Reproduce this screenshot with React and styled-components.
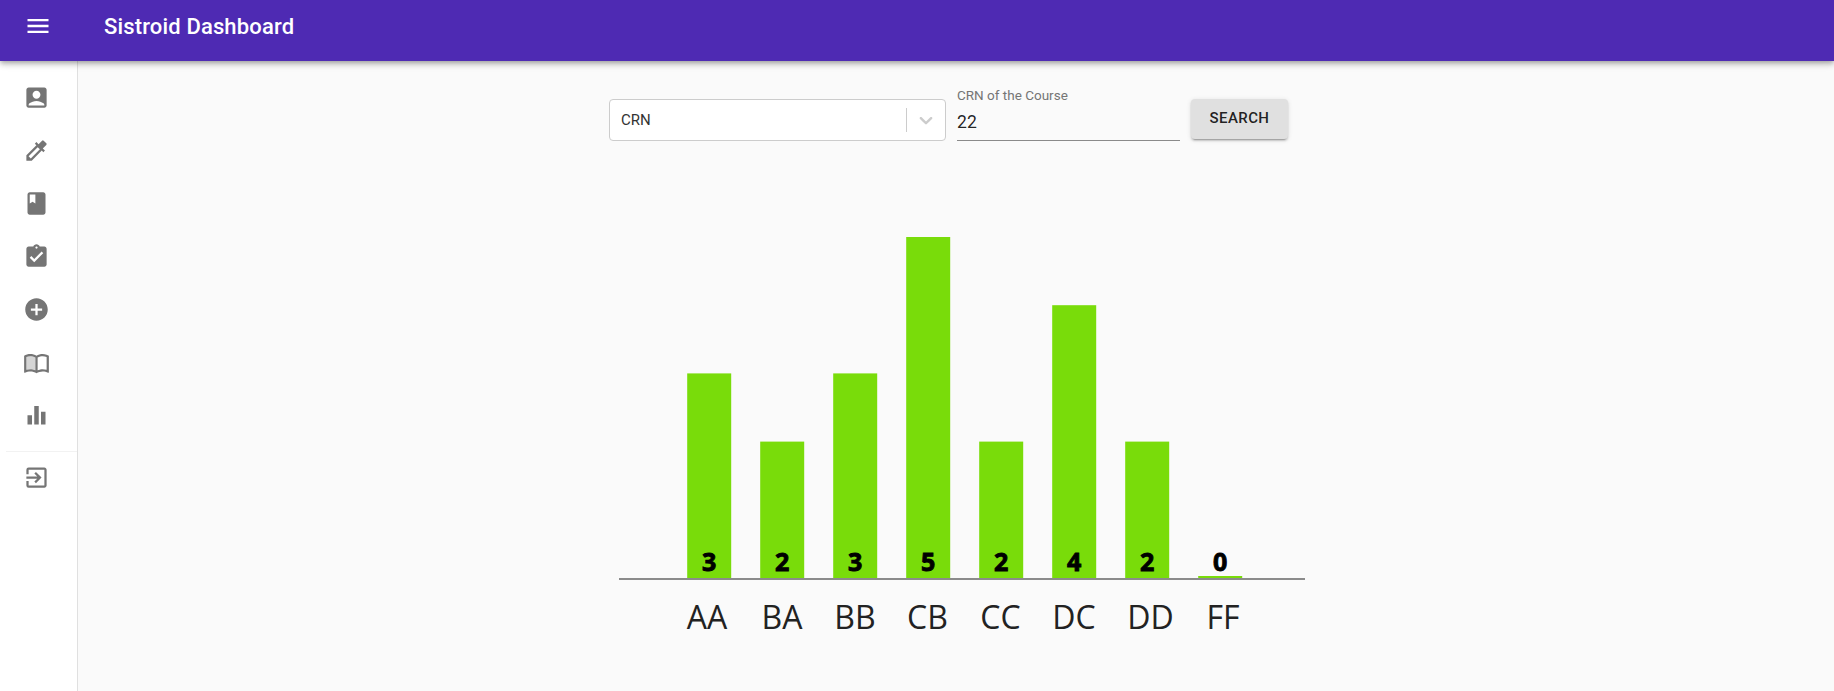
import React from "react";
import styled, { createGlobalStyle } from "styled-components";
import {
  MdMenu,
  MdAccountBox,
  MdColorize,
  MdBook,
  MdAssignmentTurnedIn,
  MdAddCircle,
  MdExitToApp,
} from "react-icons/md";

function OpenBookIcon({ size }) {
  return (
    <svg width={size} height={size} viewBox="0 0 24 24" fill="currentColor">
      <path
        opacity="0.3"
        d="M3 18.5V7c1.1-.35 2.3-.5 3.5-.5 1.34 0 3.13.41 4.5.99v11.5C9.63 18.41 7.84 18 6.5 18c-1.2 0-2.4.15-3.5.5z"
      />
      <path
        fillRule="evenodd"
        d="M21 5c-1.11-.35-2.33-.5-3.5-.5-1.95 0-4.05.4-5.5 1.5-1.45-1.1-3.55-1.5-5.5-1.5S2.45 4.9 1 6v14.65c0 .25.25.5.5.5.1 0 .15-.05.25-.05C3.1 20.45 5.05 20 6.5 20c1.95 0 4.05.4 5.5 1.5 1.35-.85 3.8-1.5 5.5-1.5 1.65 0 3.35.3 4.75 1.05.1.05.15.05.25.05.25 0 .5-.25.5-.5V6c-.6-.45-1.25-.75-2-1zM3 18.5V7c1.1-.35 2.3-.5 3.5-.5 1.34 0 3.13.41 4.5.99v11.5C9.63 18.41 7.84 18 6.5 18c-1.2 0-2.4.15-3.5.5zm18 0c-1.1-.35-2.3-.5-3.5-.5-1.34 0-3.13.41-4.5.99V7.49c1.37-.59 3.16-.99 4.5-.99 1.2 0 2.4.15 3.5.5v11.5z"
      />
    </svg>
  );
}

function BarsIcon({ size }) {
  return (
    <svg width={size} height={size} viewBox="0 0 24 24" fill="currentColor">
      <path d="M4 11.7h4V20H4zM10 3.6h4V20h-4zM16 8.7h4V20h-4z" />
    </svg>
  );
}

const NAV_ICONS = [
  MdAccountBox,
  MdColorize,
  MdBook,
  MdAssignmentTurnedIn,
  MdAddCircle,
  OpenBookIcon,
  BarsIcon,
];

const GRADES = [
  { label: "AA", count: 3, labelX: 707 },
  { label: "BA", count: 2, labelX: 782 },
  { label: "BB", count: 3, labelX: 855 },
  { label: "CB", count: 5, labelX: 927.5 },
  { label: "CC", count: 2, labelX: 1000.5 },
  { label: "DC", count: 4, labelX: 1074 },
  { label: "DD", count: 2, labelX: 1150.5 },
  { label: "FF", count: 0, labelX: 1223 },
];

const CHART_LEFT = 609;
const BASELINE = 418;
const UNIT = 68.2;

export default function App() {
  return (
    <>
      <GlobalStyle />
      <AppBar>
        <MenuButton>
          <MdMenu size={28} />
        </MenuButton>
        <Title>Sistroid Dashboard</Title>
      </AppBar>
      <Body>
        <Sidebar>
          <NavList>
            {NAV_ICONS.map((Icon, i) => (
              <NavItem key={i}>
                <Icon size={27} />
              </NavItem>
            ))}
          </NavList>
          <Divider />
          <LogoutItem>
            <MdExitToApp size={27} />
          </LogoutItem>
        </Sidebar>
        <Main>
          <Content>
            <SearchRow>
              <Select>
                <SelectValue>CRN</SelectValue>
                <Separator />
                <Chevron viewBox="0 0 20 20">
                  <path d="M4.516 7.548c.436-.446 1.043-.481 1.576 0L10 11.295l3.908-3.747c.533-.481 1.141-.446 1.574 0 .436.445.408 1.197 0 1.615-.406.418-4.695 4.502-4.695 4.502a1.095 1.095 0 0 1-1.576 0S4.924 9.581 4.516 9.163c-.409-.418-.436-1.17 0-1.615z" />
                </Chevron>
              </Select>
              <TextField>
                <FieldLabel>CRN of the Course</FieldLabel>
                <FieldValue>22</FieldValue>
              </TextField>
              <SearchButton>Search</SearchButton>
            </SearchRow>
            <Chart width="696" height="500" viewBox="0 0 696 500">
              {GRADES.map((g, i) => {
                const x = 78.2 + i * 73;
                const h = g.count === 0 ? 2 : g.count * UNIT;
                return (
                  <g key={g.label}>
                    <rect x={x} y={BASELINE - h} width="44" height={h} fill="#79dc0a" />
                    <BarValue x={x + 22} y={BASELINE - 7}>
                      {g.count}
                    </BarValue>
                    <AxisLabel x={g.labelX - CHART_LEFT} y={469}>
                      {g.label}
                    </AxisLabel>
                  </g>
                );
              })}
              <line x1="10" y1={BASELINE + 1} x2="696" y2={BASELINE + 1} stroke="#666" strokeWidth="1.5" />
            </Chart>
          </Content>
        </Main>
      </Body>
    </>
  );
}

const GlobalStyle = createGlobalStyle`
  html, body {
    margin: 0;
    height: 100%;
    background: #fafafa;
    font-family: Roboto, "Liberation Sans", sans-serif;
    overflow: hidden;
  }
`;

const AppBar = styled.header`
  position: relative;
  z-index: 2;
  display: flex;
  align-items: flex-start;
  height: 61px;
  background: #4e2ab3;
  color: #fff;
  box-shadow: 0 2px 4px -1px rgba(0, 0, 0, 0.2), 0 4px 5px 0 rgba(0, 0, 0, 0.14),
    0 1px 10px 0 rgba(0, 0, 0, 0.12);
`;

const MenuButton = styled.div`
  display: flex;
  justify-content: center;
  width: 75px;
  padding-top: 12px;
`;

const Title = styled.h1`
  margin: 0 0 0 29px;
  padding-top: 12px;
  font-size: 22px;
  font-weight: 500;
  line-height: 30px;
  letter-spacing: 0.15px;
`;

const Body = styled.div`
  display: flex;
  height: 630px;
`;

const Sidebar = styled.nav`
  width: 77px;
  flex: none;
  padding-top: 10px;
  background: #fff;
  border-right: 1px solid #e0e0e0;
`;

const NavList = styled.div`
  display: flex;
  flex-direction: column;
`;

const NavItem = styled.div`
  display: flex;
  align-items: center;
  justify-content: center;
  height: 53px;
  padding-right: 4px;
  color: #757575;
`;

const Divider = styled.div`
  height: 1px;
  margin: 9px 0 0 6px;
  background: #f2f2f2;
`;

const LogoutItem = styled(NavItem)`
  height: 50px;
`;

const Main = styled.main`
  flex: 1;
  display: flex;
  justify-content: center;
  padding-left: 2px;
`;

const Content = styled.div`
  width: 696px;
`;

const SearchRow = styled.div`
  display: flex;
  align-items: flex-start;
  height: 99px;
  padding-top: 38px;
  box-sizing: border-box;
`;

const Select = styled.div`
  display: flex;
  align-items: center;
  width: 337px;
  height: 42px;
  box-sizing: border-box;
  padding: 0 8px 0 11px;
  background: #fff;
  border: 1px solid #ccc;
  border-radius: 4px;
`;

const SelectValue = styled.span`
  flex: 1;
  font-size: 15px;
  color: #333;
`;

const Separator = styled.span`
  width: 1px;
  height: 24px;
  background: #ccc;
`;

const Chevron = styled.svg`
  width: 22px;
  height: 22px;
  margin-left: 8px;
  fill: #ccc;
`;

const TextField = styled.div`
  position: relative;
  width: 223px;
  height: 41px;
  margin: -10px 0 0 11px;
  padding-top: 10px;
  border-bottom: 1px solid #8a8a8a;
`;

const FieldLabel = styled.label`
  position: absolute;
  left: 0;
  top: -2px;
  font-size: 13.5px;
  line-height: 16px;
  color: #757575;
`;

const FieldValue = styled.div`
  padding-top: 11px;
  font-size: 17.6px;
  line-height: 24px;
  color: rgba(0, 0, 0, 0.87);
`;

const SearchButton = styled.button`
  width: 97px;
  height: 40px;
  margin-left: 11px;
  padding-bottom: 3px;
  border: 0;
  border-radius: 4px;
  background: #e0e0e0;
  color: rgba(0, 0, 0, 0.87);
  font-family: inherit;
  font-size: 15px;
  font-weight: 500;
  letter-spacing: 0.4px;
  text-transform: uppercase;
  box-shadow: 0 3px 1px -2px rgba(0, 0, 0, 0.2), 0 2px 2px 0 rgba(0, 0, 0, 0.14),
    0 1px 5px 0 rgba(0, 0, 0, 0.12);
`;

const Chart = styled.svg`
  display: block;
`;

const BarValue = styled.text`
  font-family: "Open Sans", sans-serif;
  font-size: 25px;
  font-weight: 700;
  text-anchor: middle;
  fill: #000;
  stroke: #000;
  stroke-width: 0.9px;
`;

const AxisLabel = styled.text`
  font-family: "Open Sans", sans-serif;
  font-size: 32px;
  font-weight: 400;
  text-anchor: middle;
  fill: #222;
`;
